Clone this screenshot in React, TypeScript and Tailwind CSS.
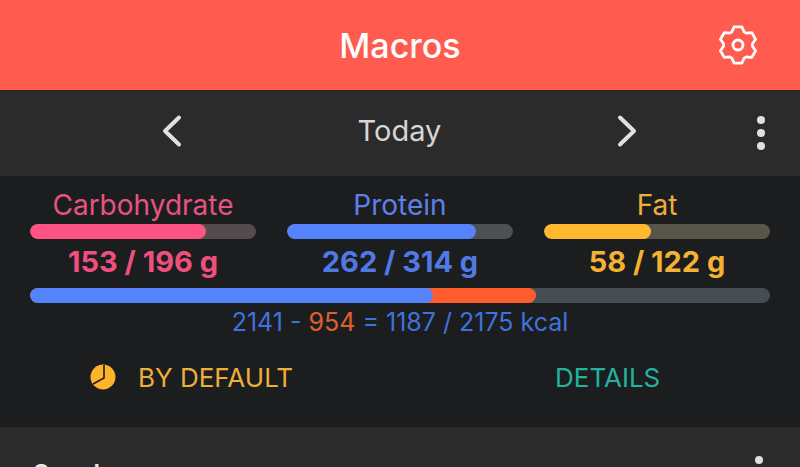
import React from 'react';

interface Macro {
  name: string;
  value: string;
  percent: number;
  textColor: string;
  valueColor: string;
  fillColor: string;
  trackColor: string;
}

const macros: Macro[] = [
  { name: 'Carbohydrate', value: '153 / 196 g', percent: 78, textColor: 'text-[#e5547f]', valueColor: 'text-[#ef4f7d]', fillColor: 'bg-[#ff5285]', trackColor: 'bg-[#544b4d]' },
  { name: 'Protein', value: '262 / 314 g', percent: 83.5, textColor: 'text-[#5c80e8]', valueColor: 'text-[#5079e6]', fillColor: 'bg-[#5583fb]', trackColor: 'bg-[#4a5054]' },
  { name: 'Fat', value: '58 / 122 g', percent: 47.5, textColor: 'text-[#eeae3c]', valueColor: 'text-[#f5b133]', fillColor: 'bg-[#ffb92f]', trackColor: 'bg-[#58564a]' },
];

// six tooth gear outline, teeth at top and bottom
const gearPath = () => {
  const pts: string[] = [];
  for (let i = 0; i < 6; i++) {
    const a = 90 + i * 60;
    [-25, -12, 12, 25].forEach((o, j) => {
      const r = j === 0 || j === 3 ? 14.5 : 18.5;
      const t = ((a + o) * Math.PI) / 180;
      pts.push(`${(24 + r * Math.cos(t)).toFixed(2)} ${(24 - r * Math.sin(t)).toFixed(2)}`);
    });
  }
  return `M${pts.join(' L')} Z`;
};

const Chevron = ({ d }: { d: string }) => (
  <svg width="24" height="34" viewBox="0 0 24 34" fill="none" stroke="#e0e0e0" strokeWidth="4" strokeLinecap="round" strokeLinejoin="round">
    <path d={d} />
  </svg>
);

const Dots = ({ className }: { className?: string }) => (
  <div className={`flex flex-col gap-[5px] ${className ?? ''}`}>
    <span className="w-2 h-2 rounded-full bg-[#e0e0e0]" />
    <span className="w-2 h-2 rounded-full bg-[#e0e0e0]" />
    <span className="w-2 h-2 rounded-full bg-[#e0e0e0]" />
  </div>
);

export default function App() {
  return (
    <div className="w-[800px] h-[467px] overflow-hidden bg-[#2b2b2b] font-['Inter',sans-serif]">
      <header className="h-[90px] bg-[#ff5c4f] grid grid-cols-[1fr_auto_1fr] items-center">
        <div />
        <h1 className="text-[34px] font-medium text-white">Macros</h1>
        <div className="flex justify-end pr-[38px]">
          <svg width="48" height="48" viewBox="0 0 48 48" fill="none" stroke="#ffffff" strokeWidth="2.8" strokeLinejoin="round">
            <path d={gearPath()} />
            <circle cx="24" cy="24" r="5" />
          </svg>
        </div>
      </header>

      <nav className="h-[86px] bg-[#2b2b2b] flex items-center pl-[160px] pr-[35px] pb-[4px]">
        <Chevron d="M19 3.5 L5 17 L19 30.5" />
        <span className="flex-1 text-center text-[29px] text-[#d6d6d6]">Today</span>
        <Chevron d="M5 3.5 L19 17 L5 30.5" />
        <Dots className="ml-[118px] mt-[4px]" />
      </nav>

      <section className="h-[251px] bg-[#1c1d1f] px-[30px]">
        <div className="grid grid-cols-3 gap-x-[31px] pt-[12px]">
          {macros.map((m) => (
            <div key={m.name} className="flex flex-col items-center">
              <span className={`text-[28px] leading-[34px] whitespace-nowrap ${m.textColor}`}>{m.name}</span>
              <div className={`w-full h-[15px] mt-[2px] rounded-full overflow-hidden ${m.trackColor}`}>
                <div className={`h-full rounded-full ${m.fillColor}`} style={{ width: `${m.percent}%` }} />
              </div>
              <span className={`text-[29px] leading-[34px] mt-[6px] font-bold whitespace-nowrap ${m.valueColor}`}>{m.value}</span>
            </div>
          ))}
        </div>

        <div className="relative h-[15px] mt-[9px] rounded-full overflow-hidden bg-[#454d52]">
          <div className="absolute left-0 top-0 h-full w-[506px] rounded-full bg-[#ff5d2e]" />
          <div className="absolute left-0 top-0 h-full w-[403px] rounded-full bg-[#5583fb]" />
        </div>

        <p className="text-center text-[25px] leading-[30px] mt-[4px] text-[#3f72dc]">
          2141 - <span className="text-[#e0602e]">954</span> = 1187 / 2175 kcal
        </p>

        <div className="flex mt-[24px] h-[32px] items-center">
          <div className="w-[262px] flex items-center pl-[60px] gap-[22px]">
            <svg width="26" height="26" viewBox="0 0 26 26" className="shrink-0">
              <circle cx="13" cy="13" r="12.5" fill="#ffb327" />
              <path d="M14 1 V14 L3 20" fill="none" stroke="#1c1d1f" strokeWidth="1.6" />
            </svg>
            <span className="text-[26px] text-[#eeae3c] whitespace-nowrap">BY DEFAULT</span>
          </div>
          <span className="ml-[263px] text-[26px] text-[#22b3a0]">DETAILS</span>
        </div>
      </section>

      <div className="relative px-[33px] pt-[32px]">
        <span className="text-[25px] leading-[30px] font-semibold text-[#e8e8e8]">Snacks</span>
        <Dots className="absolute right-[37px] top-[29px]" />
      </div>
    </div>
  );
}
